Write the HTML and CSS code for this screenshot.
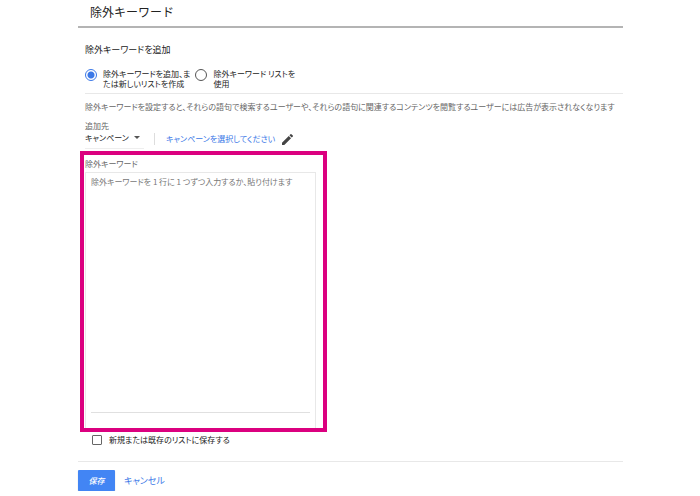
FILE: index.html
```html
<!DOCTYPE html>
<html lang="ja">
<head>
    <meta charset="UTF-8">
    <meta name="viewport" content="width=device-width, initial-scale=1.0">
    <title>除外キーワード</title>
    <link rel="stylesheet" href="styles.css">
</head>
<body>
    <header class="header">
        <h1>除外キーワード</h1>
    </header>
    <form class="form">
        <h2>除外キーワードを追加</h2>
        <div class="options">
            <label class="option">
                <input type="radio" name="mode" checked>
                <span>除外キーワードを追加、ま<br>たは新しいリストを作成</span>
            </label>
            <label class="option">
                <input type="radio" name="mode">
                <span>除外キーワード リストを<br>使用</span>
            </label>
        </div>
        <p class="description">除外キーワードを設定すると、それらの語句で検索するユーザーや、それらの語句に関連するコンテンツを閲覧するユーザーには広告が表示されなくなります</p>
        <label class="caption" for="target">追加先</label>
        <div class="target">
            <div class="select">
                <select id="target">
                    <option>キャンペーン</option>
                </select>
                <svg class="arrow" viewBox="0 0 6 3"><path d="M0 0h6L3 3z" fill="#555"/></svg>
            </div>
            <a class="campaign" href="#">キャンペーンを選択してください
                <svg class="pencil" viewBox="3 3 18 18"><path d="M3 17.25V21h3.75L17.81 9.94l-3.75-3.75L3 17.25zM20.71 7.04a1 1 0 0 0 0-1.41l-2.34-2.34a1 1 0 0 0-1.41 0l-1.83 1.83 3.75 3.75 1.83-1.83z" fill="#444"/></svg>
            </a>
        </div>
        <div class="highlight">
            <label class="caption" for="keywords">除外キーワード</label>
            <div class="keywords">
                <textarea id="keywords" placeholder="除外キーワードを 1 行に 1 つずつ入力するか、貼り付けます"></textarea>
            </div>
        </div>
        <label class="save-list">
            <input type="checkbox">
            <span>新規または既存のリストに保存する</span>
        </label>
        <div class="actions">
            <button class="save" type="submit">保存</button>
            <button class="cancel" type="button">キャンセル</button>
        </div>
    </form>
</body>
</html>
```
FILE: styles.css
```css
* {
    box-sizing: border-box;
}
body {
    margin: 0;
    padding: 0 77px 0 78px;
    background-color: #fff;
    color: #222;
    font-family: "Noto Sans CJK JP", sans-serif;
    font-size: 8px;
    line-height: 10px;
    font-feature-settings: "palt";
}
input, select, textarea, button {
    font: inherit;
    font-feature-settings: inherit;
    color: inherit;
    margin: 0;
}
.header {
    padding: 2px 12px 4px;
    border-bottom: 2px solid #b4b4b4;
}
h1 {
    margin: 0;
    font-size: 12px;
    line-height: 20px;
    font-weight: 400;
    font-feature-settings: normal;
}
h2 {
    margin: 16px 7px 12px;
    font-size: 9px;
    line-height: 12px;
    font-weight: 400;
}
.options {
    display: flex;
    gap: 5px;
    margin-left: 7px;
    padding-bottom: 4px;
    border-bottom: 1px solid #e8e8e8;
}
.option {
    display: flex;
    align-items: flex-start;
    gap: 6px;
    padding-top: 1px;
}
.option input {
    appearance: none;
    flex: none;
    width: 12px;
    height: 12px;
    border: 1px solid #555;
    border-radius: 50%;
}
.option input:checked {
    border-color: #3b78e7;
    background: radial-gradient(circle, #3b78e7 3px, #fff 4px);
}
.description {
    margin: 8px 0 9px 7px;
    color: #666;
    white-space: nowrap;
}
.caption {
    display: block;
    color: #666;
}
.form > .caption {
    margin-left: 7px;
}
.target {
    display: flex;
    align-items: flex-start;
    margin-left: 7px;
}
.select {
    display: flex;
    align-items: center;
    width: 59px;
    height: 18px;
    padding-bottom: 4px;
    border-bottom: 1px solid #eee;
}
select {
    appearance: none;
    width: 49px;
    padding: 0;
    border: 0;
    background: none;
}
.arrow {
    width: 6px;
    height: 3px;
}
.campaign {
    display: flex;
    align-items: center;
    gap: 7px;
    height: 12px;
    margin: 2px 0 0 10px;
    padding-left: 11px;
    border-left: 1px solid #ddd;
    color: #3b78e7;
    text-decoration: none;
}
.pencil {
    width: 11px;
    height: 11px;
}
.highlight {
    width: 247px;
    margin: 2px 0 0 2px;
    padding: 4px 7px 0 1px;
    border: 4px solid #db007f;
}
.keywords {
    margin-top: 3px;
    padding: 0 5px 15px;
    border: 1px solid #e8e8e8;
    border-bottom: 0;
}
textarea {
    display: block;
    width: 100%;
    height: 240px;
    padding: 4px 0;
    border: 0;
    border-bottom: 1px solid #e0e0e0;
    background: none;
    resize: none;
}
textarea::placeholder {
    color: #777;
    opacity: 1;
}
.save-list {
    display: flex;
    align-items: center;
    gap: 7px;
    padding: 3px 0 0 14px;
}
.save-list input {
    appearance: none;
    width: 10px;
    height: 10px;
    border: 1px solid #666;
    border-radius: 1px;
}
.actions {
    display: flex;
    gap: 9px;
    margin-top: 16px;
    padding-top: 8px;
    border-top: 1px solid #e8e8e8;
}
.actions button {
    height: 21px;
    padding: 0;
    border: 0;
    font-size: 9px;
    background: none;
    color: #3b78e7;
    cursor: pointer;
}
.actions .save {
    width: 37px;
    border-radius: 1px;
    background-color: #4285f4;
    box-shadow: 0 1px 1px #aaa;
    color: #fff;
    font-size: 8px;
    font-weight: 500;
    font-style: italic;
}
```
